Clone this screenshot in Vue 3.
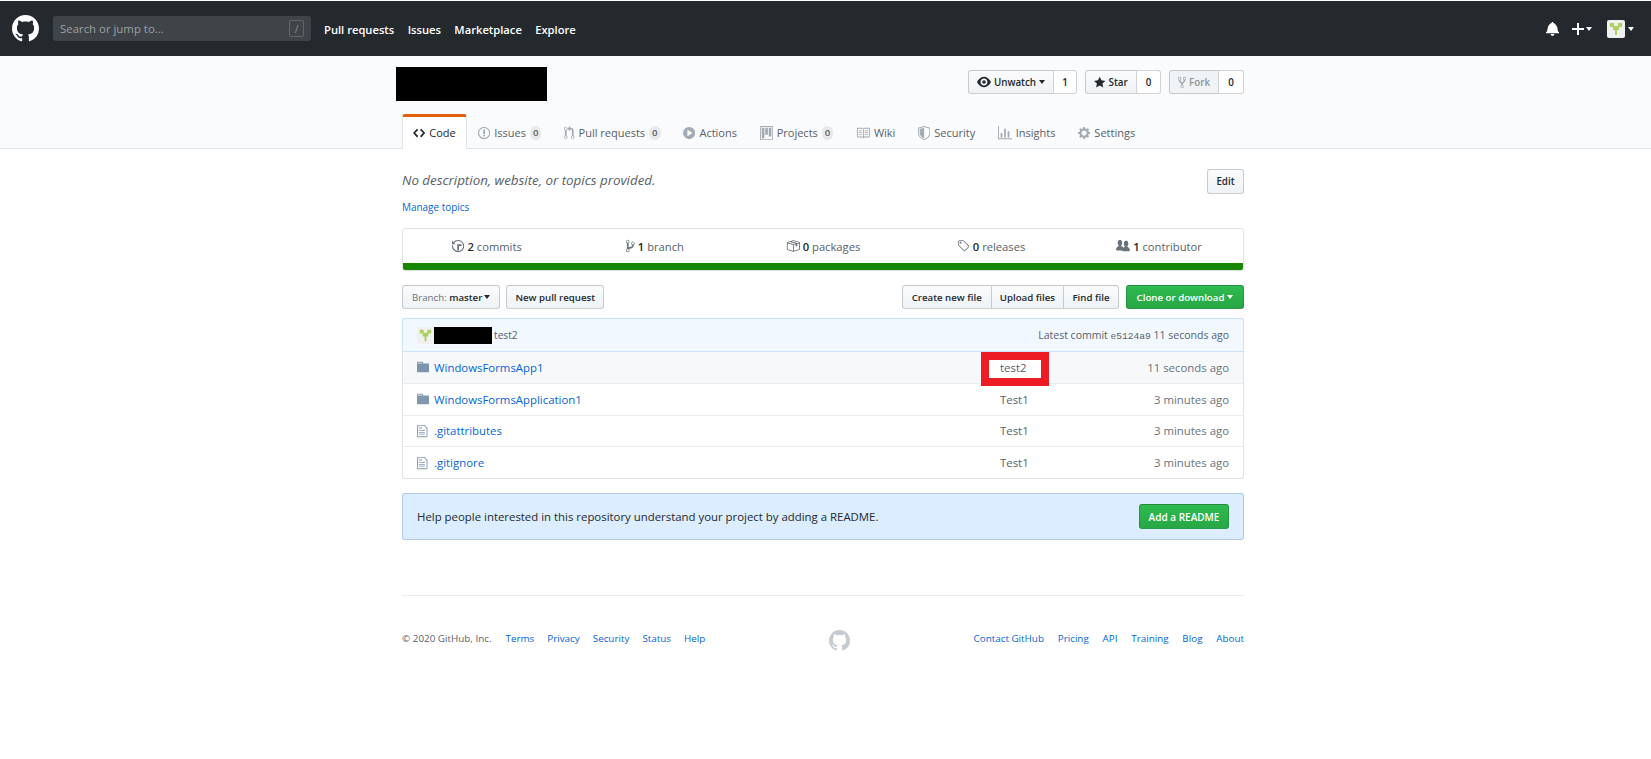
<script setup>
const p = {
  mark: 'M8 0C3.58 0 0 3.58 0 8c0 3.54 2.29 6.53 5.47 7.59.4.07.55-.17.55-.38 0-.19-.01-.82-.01-1.49-2.01.37-2.53-.49-2.69-.94-.09-.23-.48-.94-.82-1.13-.28-.15-.68-.52-.01-.53.63-.01 1.08.58 1.23.82.72 1.21 1.87.87 2.33.66.07-.52.28-.87.51-1.07-1.78-.2-3.64-.89-3.64-3.95 0-.87.31-1.59.82-2.15-.08-.2-.36-1.02.08-2.12 0 0 .67-.21 2.2.82.64-.18 1.32-.27 2-.27.68 0 1.36.09 2 .27 1.53-1.04 2.2-.82 2.2-.82.44 1.1.16 1.92.08 2.12.51.56.82 1.27.82 2.15 0 3.07-1.87 3.75-3.65 3.95.29.25.54.73.54 1.48 0 1.07-.01 1.93-.01 2.2 0 .21.15.46.55.38A8.013 8.013 0 0016 8c0-4.42-3.58-8-8-8z',
  bell: 'M14 12v1H0v-1l.73-.58c.77-.77.81-2.55 1.19-4.42C2.69 3.23 6 2 6 2c0-.55.45-1 1-1s1 .45 1 1c0 0 3.39 1.23 4.16 5 .38 1.88.42 3.66 1.19 4.42l.66.58H14zm-7 4c1.11 0 2-.89 2-2H5c0 1.11.89 2 2 2z',
  plus: 'M12 9H7v5H5V9H0V7h5V2h2v5h5v2z',
  eye: 'M8.06 2C3 2 0 8 0 8s3 6 8.06 6C13 14 16 8 16 8s-3-6-7.94-6zM8 12c-2.2 0-4-1.78-4-4 0-2.2 1.8-4 4-4 2.22 0 4 1.8 4 4 0 2.22-1.78 4-4 4zm2-4c0 1.11-.89 2-2 2-1.11 0-2-.89-2-2 0-1.11.89-2 2-2 1.11 0 2 .89 2 2z',
  star: 'M14 6l-4.9-.64L7 1 4.9 5.36 0 6l3.6 3.26L2.67 14 7 11.67 11.33 14l-.93-4.74L14 6z',
  fork: 'M8 1a1.993 1.993 0 00-1 3.72V6L5 8 3 6V4.72A1.993 1.993 0 002 1a1.993 1.993 0 00-1 3.72V6.5l3 3v1.78A1.993 1.993 0 005 15a1.993 1.993 0 001-3.72V9.5l3-3V4.72A1.993 1.993 0 008 1zM2 4.2C1.34 4.2.8 3.65.8 3c0-.65.55-1.2 1.2-1.2.65 0 1.2.55 1.2 1.2 0 .65-.55 1.2-1.2 1.2zm3 10c-.66 0-1.2-.55-1.2-1.2 0-.65.55-1.2 1.2-1.2.65 0 1.2.55 1.2 1.2 0 .65-.55 1.2-1.2 1.2zm3-10c-.66 0-1.2-.55-1.2-1.2 0-.65.55-1.2 1.2-1.2.65 0 1.2.55 1.2 1.2 0 .65-.55 1.2-1.2 1.2z',
  code: 'M9.5 3L8 4.5 11.5 8 8 11.5 9.5 13 14 8 9.5 3zm-5 0L0 8l4.5 5L6 11.5 2.5 8 6 4.5 4.5 3z',
  issue: 'M7 2.3c3.14 0 5.7 2.56 5.7 5.7s-2.56 5.7-5.7 5.7A5.71 5.71 0 011.3 8c0-3.14 2.56-5.7 5.7-5.7zM7 1C3.14 1 0 4.14 0 8s3.14 7 7 7 7-3.14 7-7-3.14-7-7-7zm1 3H6v5h2V4zm0 6H6v2h2v-2z',
  pr: 'M11 11.28V5c-.03-.78-.34-1.47-.94-2.06C9.46 2.35 8.78 2.03 8 2H7V0L4 3l3 3V4h1c.27.02.48.11.69.31.21.2.3.42.31.69v6.28A1.993 1.993 0 0010 15a1.993 1.993 0 001-3.72zm-1 2.92c-.66 0-1.2-.55-1.2-1.2 0-.65.55-1.2 1.2-1.2.65 0 1.2.55 1.2 1.2 0 .65-.55 1.2-1.2 1.2zM4 3c0-1.11-.89-2-2-2a1.993 1.993 0 00-1 3.72v6.56A1.993 1.993 0 002 15a1.993 1.993 0 001-3.72V4.72c.59-.34 1-.98 1-1.72zm-.8 10c0 .66-.55 1.2-1.2 1.2-.65 0-1.2-.55-1.2-1.2 0-.65.55-1.2 1.2-1.2.65 0 1.2.55 1.2 1.2zM2 4.2C1.34 4.2.8 3.65.8 3c0-.65.55-1.2 1.2-1.2.65 0 1.2.55 1.2 1.2 0 .65-.55 1.2-1.2 1.2z',
  play: 'M14 8A7 7 0 110 8a7 7 0 0114 0zm-8.223 3.482l4.599-3.066a.5.5 0 000-.832L5.777 4.518A.5.5 0 005 4.934v6.132a.5.5 0 00.777.416z',
  project: 'M10 12h3V2h-3v10zm-4-2h3V2H6v8zm-4 4h3V2H2v12zm-1 1h13V1H1v14zM14 0H1a1 1 0 00-1 1v14a1 1 0 001 1h13a1 1 0 001-1V1a1 1 0 00-1-1z',
  book: 'M3 5h4v1H3V5zm0 3h4V7H3v1zm0 2h4V9H3v1zm11-5h-4v1h4V5zm0 2h-4v1h4V7zm0 2h-4v1h4V9zm2-6v9c0 .55-.45 1-1 1H9.5l-1 1-1-1H2c-.55 0-1-.45-1-1V3c0-.55.45-1 1-1h5.5l1 1 1-1H15c.55 0 1 .45 1 1zm-8 .5L7.5 3H2v9h6V3.5zm7-.5H9.5l-.5.5V12h6V3z',
  shield: 'M0 2l7-2 7 2v6.02C14 12.69 8.69 16 7 16c-1.69 0-7-3.31-7-7.98V2zm1 .75L7 1l6 1.75v5.268C13 12.104 8.449 15 7 15c-1.449 0-6-2.896-6-6.982V2.75zm1 .75L7 2v12c-1.207 0-5-2.482-5-5.985V3.5z',
  graph: 'M16 14v1H0V0h1v14h15zM5 13H3V8h2v5zm4 0H7V3h2v10zm4 0h-2V6h2v7z',
  gear: 'M14 8.77v-1.6l-1.94-.64-.45-1.09.88-1.84-1.13-1.13-1.81.91-1.09-.45-.69-1.92h-1.6l-.63 1.94-1.11.45-1.84-.88-1.13 1.13.91 1.81-.45 1.09L0 7.23v1.59l1.94.64.45 1.09-.88 1.84 1.13 1.13 1.81-.91 1.09.45.69 1.92h1.59l.63-1.94 1.11-.45 1.84.88 1.13-1.13-.92-1.81.47-1.09L14 8.75v.02zM7 11c-1.66 0-3-1.34-3-3s1.34-3 3-3 3 1.34 3 3-1.34 3-3 3z',
  history: 'M8 13H6V6h5v2H8v5zM7 1C4.81 1 2.87 2.02 1.59 3.59L0 2v4h4L2.5 4.5C3.55 3.17 5.17 2.3 7 2.3c3.14 0 5.7 2.56 5.7 5.7s-2.56 5.7-5.7 5.7A5.71 5.71 0 011.3 8c0-.34.03-.67.09-1H.08C.03 7.33 0 7.66 0 8c0 3.86 3.14 7 7 7s7-3.14 7-7-3.14-7-7-7z',
  branch: 'M10 5c0-1.11-.89-2-2-2a1.993 1.993 0 00-1 3.72v.3c-.02.52-.23.98-.63 1.38-.4.4-.86.61-1.38.63-.83.02-1.48.16-2 .45V4.72a1.993 1.993 0 00-1-3.72C.88 1 0 1.89 0 3a2 2 0 001 1.72v6.56c-.59.35-1 .99-1 1.72 0 1.11.89 2 2 2 1.11 0 2-.89 2-2 0-.53-.2-1-.53-1.36.09-.06.48-.41.59-.47.25-.11.56-.17.94-.17 1.05-.05 1.95-.45 2.75-1.25S8.95 7.77 9 6.73h-.02C9.59 6.37 10 5.73 10 5zM2 1.8c.66 0 1.2.55 1.2 1.2 0 .65-.55 1.2-1.2 1.2C1.35 4.2.8 3.65.8 3c0-.65.55-1.2 1.2-1.2zm0 12.41c-.66 0-1.2-.55-1.2-1.2 0-.65.55-1.2 1.2-1.2.65 0 1.2.55 1.2 1.2 0 .65-.55 1.2-1.2 1.2zm6-8c-.66 0-1.2-.55-1.2-1.2 0-.65.55-1.2 1.2-1.2.65 0 1.2.55 1.2 1.2 0 .65-.55 1.2-1.2 1.2z',
  pkg: 'M1 4.27v7.47c0 .45.3.84.75.97l6.5 1.73c.16.05.34.05.5 0l6.5-1.73c.45-.13.75-.52.75-.97V4.27c0-.45-.3-.84-.75-.97l-6.5-1.74a1.4 1.4 0 00-.5 0L1.75 3.3c-.45.13-.75.52-.75.97zm7 9.09l-6-1.59V5l6 1.61v6.75zM2 4l2.5-.67L11 5.06l-2.5.67L2 4zm13 7.77l-6 1.59V6.61l2-.55V8.5l2-.53V5.53L15 5v6.77zm-2-7.24L6.5 2.8l2-.53L15 4l-2 .53z',
  tag: 'M7.73 1.73C7.26 1.26 6.62 1 5.96 1H3.5C2.13 1 1 2.13 1 3.5v2.47c0 .66.27 1.3.73 1.77l6.06 6.06c.39.39 1.02.39 1.41 0l4.59-4.59a.996.996 0 000-1.41L7.73 1.73zM2.38 7.09c-.31-.3-.47-.7-.47-1.13V3.5c0-.88.72-1.59 1.59-1.59h2.47c.42 0 .83.16 1.13.47l6.14 6.13-4.73 4.73-6.13-6.15zM3.01 3h2v2H3V3h.01z',
  org: 'M16 12.999c0 .439-.45 1-1 1H7.995c-.539 0-.994-.447-.995-.999H1c-.54 0-1-.561-1-1 0-2.634 3-4 3-4s.229-.409 0-1c-.841-.621-1.058-.59-1-3 .058-2.419 1.367-3 2.5-3s2.442.58 2.5 3c.058 2.41-.159 2.379-1 3-.229.59 0 1 0 1s1.549.711 2.42 2.088C9.196 9.369 10 8.999 10 8.999s.229-.409 0-1c-.841-.62-1.058-.59-1-3 .058-2.419 1.367-3 2.5-3s2.437.581 2.495 3c.059 2.41-.158 2.38-1 3-.229.59 0 1 0 1s3.005 1.366 3.005 4z',
  dir: 'M13 4H7V3c0-.66-.31-1-1-1H1c-.55 0-1 .45-1 1v10c0 .55.45 1 1 1h12c.55 0 1-.45 1-1V5c0-.55-.45-1-1-1zM6 4H1V3h5v1z',
  file: 'M6 5H2V4h4v1zM2 8h7V7H2v1zm0 2h7V9H2v1zm0 2h7v-1H2v1zm10-7.5V14c0 .55-.45 1-1 1H1c-.55 0-1-.45-1-1V2c0-.55.45-1 1-1h7.5L12 4.5zM11 5L8 2H1v12h10V5z'
}
const identicon = 'M3 3h4v3h4V3h4v4h-3v3h-2v5H8v-5H6V7H3z'
const navs = ['Pull requests', 'Issues', 'Marketplace', 'Explore']
const tabs = [
  { t: 'Issues', i: 'issue', w: 14, c: 0 },
  { t: 'Pull requests', i: 'pr', w: 12, c: 0 },
  { t: 'Actions', i: 'play', w: 14 },
  { t: 'Projects', i: 'project', w: 15, c: 0 },
  { t: 'Wiki', i: 'book', w: 16 },
  { t: 'Security', i: 'shield', w: 14 },
  { t: 'Insights', i: 'graph', w: 16 },
  { t: 'Settings', i: 'gear', w: 14 }
]
const stats = [
  { n: 2, t: 'commits', i: 'history', w: 14 },
  { n: 1, t: 'branch', i: 'branch', w: 10 },
  { n: 0, t: 'packages', i: 'pkg', w: 16 },
  { n: 0, t: 'releases', i: 'tag', w: 15 },
  { n: 1, t: 'contributor', i: 'org', w: 16 }
]
const files = [
  { name: 'WindowsFormsApp1', i: 'dir', w: 14, msg: 'test2', age: '11 seconds ago', hl: true },
  { name: 'WindowsFormsApplication1', i: 'dir', w: 14, msg: 'Test1', age: '3 minutes ago' },
  { name: '.gitattributes', i: 'file', w: 12, msg: 'Test1', age: '3 minutes ago' },
  { name: '.gitignore', i: 'file', w: 12, msg: 'Test1', age: '3 minutes ago' }
]
const footL = ['Terms', 'Privacy', 'Security', 'Status', 'Help']
const footR = ['Contact GitHub', 'Pricing', 'API', 'Training', 'Blog', 'About']
</script>

<template>
  <div class="page">
    <header class="top">
      <svg class="logo" viewBox="0 0 16 16"><path :d="p.mark" /></svg>
      <div class="search">
        <span>Search or jump to...</span>
        <kbd class="slash">/</kbd>
      </div>
      <nav class="topnav">
        <a v-for="n in navs" :key="n">{{ n }}</a>
      </nav>
      <div class="topright">
        <svg class="bell" viewBox="0 0 14 16"><path :d="p.bell" /></svg>
        <svg class="plus" viewBox="0 0 12 16"><path :d="p.plus" /></svg>
        <i class="caret light pluscaret"></i>
        <svg class="avatar big" viewBox="0 0 18 18">
          <rect width="18" height="18" rx="2" fill="#f0f0f0" />
          <path :d="identicon" fill="#a9d15c" />
        </svg>
        <i class="caret light"></i>
      </div>
    </header>

    <section class="repohead">
      <div class="wrap">
        <div class="titlerow">
          <div class="redact-title"></div>
          <div class="actions">
            <div class="pair">
              <span class="btn w-un"><svg class="oc eye" viewBox="0 0 16 16"><path :d="p.eye" /></svg>Unwatch<i class="caret tight"></i></span>
              <span class="count">1</span>
            </div>
            <div class="pair">
              <span class="btn w-st"><svg class="oc" viewBox="0 0 14 16"><path :d="p.star" /></svg>Star</span>
              <span class="count c2">0</span>
            </div>
            <div class="pair">
              <span class="btn off w-fk"><svg class="oc" viewBox="0 0 10 16"><path :d="p.fork" /></svg>Fork</span>
              <span class="count c3">0</span>
            </div>
          </div>
        </div>
        <nav class="tabs">
          <a class="tab on"><svg class="oc" viewBox="0 0 14 16"><path :d="p.code" /></svg>Code</a>
          <a v-for="t in tabs" :key="t.t" class="tab">
            <svg class="oc" :viewBox="`0 0 ${t.w} 16`"><path :d="p[t.i]" /></svg>{{ t.t }}
            <span v-if="t.c !== undefined" class="pill">{{ t.c }}</span>
          </a>
        </nav>
      </div>
    </section>

    <main class="wrap">
      <div class="descrow">
        <em>No description, website, or topics provided.</em>
        <span class="btn solo">Edit</span>
      </div>
      <a class="link topics">Manage topics</a>

      <div class="summary">
        <ul>
          <li v-for="s in stats" :key="s.t">
            <svg class="oc" :viewBox="`0 0 ${s.w} 16`"><path :d="p[s.i]" /></svg>
            <span><b>{{ s.n }}</b> {{ s.t }}</span>
          </li>
        </ul>
        <div class="langbar"></div>
      </div>

      <div class="filebar">
        <span class="btn bar solo brbtn"><span class="dim">Branch:</span>&nbsp;master<i class="caret"></i></span>
        <span class="btn bar solo newpr">New pull request</span>
        <div class="grp">
          <span class="btn bar">Create new file</span>
          <span class="btn bar">Upload files</span>
          <span class="btn bar">Find file</span>
        </div>
        <span class="btn bar solo green">Clone or download<i class="caret light"></i></span>
      </div>

      <div class="files">
        <div class="commit">
          <svg class="avatar" viewBox="0 0 18 18">
            <rect width="18" height="18" fill="#f0f0f0" />
            <path :d="identicon" fill="#a9d15c" />
          </svg>
          <span class="redact-name"></span>
          <span class="cmsg">test2</span>
          <span class="latest">Latest commit <span class="sha">e5124a9</span> 11 seconds ago</span>
        </div>
        <div v-for="f in files" :key="f.name" class="row" :class="{ hl: f.hl }">
          <span class="ficon"><svg :viewBox="`0 0 ${f.w} 16`"><path :d="p[f.i]" /></svg></span>
          <a class="link fname">{{ f.name }}</a>
          <span class="fmsg" :class="{ boxed: f.hl }">{{ f.msg }}</span>
          <span class="fage">{{ f.age }}</span>
        </div>
      </div>

      <div class="readme">
        <span>Help people interested in this repository understand your project by adding a README.</span>
        <span class="btn bar solo green addbtn">Add a README</span>
      </div>

      <footer class="foot">
        <div class="fl">
          <span class="copy">© 2020 GitHub, Inc.</span>
          <a v-for="l in footL" :key="l" class="link">{{ l }}</a>
        </div>
        <svg class="footlogo" viewBox="0 0 16 16"><path :d="p.mark" /></svg>
        <div class="fr">
          <a v-for="l in footR" :key="l" class="link">{{ l }}</a>
        </div>
      </footer>
    </main>
  </div>
</template>

<style>
html, body { margin: 0; background: #fff; }
</style>

<style scoped>
.page {
  font-family: "Open Sans", "Noto Sans", "Liberation Sans", sans-serif;
  font-size: 11.2px;
  color: #24292e;
  padding-top: 1px;
  min-height: 758px;
}
.wrap { width: 842px; margin-left: 402px; }
.link { color: #0366d6; }
svg { fill-rule: evenodd; }
.oc { height: 14px; width: auto; fill: currentColor; flex: none; }

/* top bar */
.top {
  height: 55px;
  background: #24292e;
  display: flex;
  align-items: center;
  padding: 0 17px 0 12px;
  color: #fff;
}
.logo { width: 27px; height: 27px; fill: #fff; flex: none; }
.search {
  margin-left: 14px;
  width: 258px;
  height: 25px;
  box-sizing: border-box;
  background: #3f4448;
  border-radius: 3px;
  color: #9da0a3;
  display: flex;
  align-items: center;
  justify-content: space-between;
  padding: 0 7px;
  font-size: 11.4px;
}
.slash {
  width: 15px;
  height: 17px;
  box-sizing: border-box;
  border: 1px solid #62676b;
  border-radius: 2px;
  font: 10px "Open Sans", sans-serif;
  display: flex;
  align-items: center;
  justify-content: center;
  color: #8c9094;
}
.topnav { margin: 2px 0 0 13px; display: flex; gap: 13.4px; font-weight: 600; font-size: 11.2px; }
.topright { margin-left: auto; display: flex; align-items: center; }
.bell { height: 15px; width: 13px; fill: #fff; }
.plus { height: 16px; width: 12px; fill: #fff; margin-left: 13px; }
.caret {
  display: inline-block;
  width: 0;
  height: 0;
  border: 3px solid transparent;
  border-top: 4px solid #24292e;
  border-bottom: 0;
  margin-left: 3px;
}
.caret.light { border-top-color: #fff; }
.pluscaret { margin-left: 2px; }
.caret.tight { margin-left: 0; }
.avatar.big { width: 18px; height: 18px; margin-left: 15px; }

/* repo head */
.repohead { background: #fafbfc; border-bottom: 1px solid #e1e4e8; box-sizing: border-box; height: 93px; }
.titlerow { display: flex; justify-content: space-between; padding-top: 11px; height: 58px; box-sizing: border-box; }
.redact-title { width: 151px; height: 34px; background: #000; margin-left: -6px; }
.actions { display: flex; gap: 8px; margin-top: 3px; height: 24px; }
.pair { display: flex; height: 24px; }
.btn {
  display: inline-flex;
  align-items: center;
  gap: 3px;
  box-sizing: border-box;
  height: 24px;
  padding: 0 8px;
  border: 1px solid rgba(27, 31, 35, .2);
  border-radius: 3px 0 0 3px;
  background: linear-gradient(#fafbfc, #eff3f6);
  font-weight: 600;
  font-size: 9.8px;
  color: #24292e;
  white-space: nowrap;
}
.w-un, .w-st, .w-fk { justify-content: center; padding: 0; }
.w-un { width: 86px; }
.w-st { width: 52px; }
.w-fk { width: 50px; }
.btn.off { color: #8e9296; background: #eff3f6; }
.btn.off .oc { color: #a3a7ab; }
.pair .oc { height: 13px; }
.pair .oc.eye { height: 14px; }
.count {
  display: flex;
  align-items: center;
  justify-content: center;
  box-sizing: border-box;
  height: 24px;
  width: 24px;
  margin-left: -1px;
  background: #fff;
  border: 1px solid rgba(27, 31, 35, .2);
  border-radius: 0 3px 3px 0;
  font-weight: 600;
  font-size: 9.8px;
}
.count.c2 { width: 25px; }
.count.c3 { width: 26px; }
.tabs { display: flex; height: 35px; }
.tab {
  display: flex;
  align-items: center;
  gap: 4px;
  box-sizing: border-box;
  height: 35px;
  padding: 2px 11.3px 0;
  color: #586069;
  font-size: 11px;
  white-space: nowrap;
}
.tab .oc { color: #a3aab1; height: 14px; }
.tab.on {
  background: #fff;
  color: #24292e;
  border: 1px solid #e1e4e8;
  border-top: 3px solid #e36209;
  border-bottom: 0;
  border-radius: 3px 3px 0 0;
  padding: 0 10px 1px;
}
.tab.on .oc { color: #24292e; }
.pill {
  display: inline-block;
  background: rgba(27, 31, 35, .08);
  color: #586069;
  border-radius: 7px;
  padding: 0 3px;
  line-height: 14px;
  font-size: 9.6px;
  font-weight: 600;
}

/* main */
.descrow { display: flex; justify-content: space-between; align-items: flex-start; margin-top: 20px; height: 25px; }
.descrow em { font-size: 13.35px; line-height: 22px; color: #586069; }
.btn.solo { border-radius: 3px; }
.descrow .btn { width: 37px; height: 25px; justify-content: center; padding: 0; }
.topics { display: block; margin-top: 6px; line-height: 14px; font-size: 9.95px; }
.summary {
  margin-top: 14px;
  height: 43px;
  box-sizing: border-box;
  border: 1px solid #dfe2e5;
  border-radius: 3px;
  overflow: hidden;
  display: flex;
  flex-direction: column;
}
.summary ul { list-style: none; margin: 0; padding: 0; display: flex; height: 35px; }
.summary li {
  flex: 1;
  display: flex;
  align-items: center;
  justify-content: center;
  gap: 3px;
  color: #586069;
  font-size: 11.2px;
  white-space: pre;
}
.summary li b { color: #24292e; font-weight: 600; }
.summary .oc { color: #6a737d; height: 14px; }
.langbar { height: 7px; background: #178600; }

.filebar { display: flex; align-items: center; margin-top: 14px; height: 24px; }
.btn.bar { height: 24px; padding: 0 9px; border-radius: 0; gap: 0; font-size: 9.7px; }
.btn.bar.solo { border-radius: 3px; }
.dim { color: #6a737d; font-weight: 400; }
.brbtn .caret { margin-left: 2px; }
.btn.bar.newpr { margin-left: 6px; padding: 0 8px; }
.grp { margin-left: auto; display: flex; border-radius: 3px; }
.grp .btn { margin-left: -1px; }
.grp .btn:first-child { border-radius: 3px 0 0 3px; margin-left: 0; }
.grp .btn.bar:nth-child(2) { padding: 0 8px; }
.grp .btn.bar:last-child { border-radius: 0 3px 3px 0; padding: 0 8.5px; }
.btn.green {
  background: linear-gradient(#2ebb4f, #28a745);
  color: #fff;
  border-color: rgba(27, 31, 35, .2);
}
.filebar .green { margin-left: 7px; width: 118px; justify-content: center; padding: 0; }

.files {
  margin-top: 9px;
  border: 1px solid #dfe2e5;
  border-top: 0;
  border-radius: 3px;
}
.commit {
  height: 33px;
  box-sizing: border-box;
  display: flex;
  align-items: center;
  padding: 0 14px;
  background: #f1f8ff;
  border: 1px solid #c8e1ff;
  border-bottom: 0;
  margin: 0 -1px;
  border-radius: 3px 3px 0 0;
  color: #586069;
  font-size: 10.5px;
}
.commit .avatar { width: 17px; height: 17px; flex: none; }
.redact-name { width: 58px; height: 17px; background: #000; flex: none; }
.cmsg { margin-left: 2px; font-size: 10.2px; }
.latest { margin-left: auto; }
.sha { font-family: "Liberation Mono", monospace; font-size: 9.6px; }
.row {
  height: 31.75px;
  box-sizing: border-box;
  border-top: 1px solid #eaecef;
  display: flex;
  align-items: center;
  padding: 0 14px;
  position: relative;
  font-size: 11.4px;
}
.row:nth-child(2) { border-top-color: #c8e1ff; }
.row.hl { background: #f6f8fa; z-index: 1; }
.ficon { width: 17px; display: flex; }
.ficon svg { height: 14px; width: auto; fill: rgba(3, 47, 98, .5); }
.fname { flex: none; width: 566px; }
.fmsg { color: #586069; position: relative; }
.boxed::before {
  content: "";
  position: absolute;
  left: -19px;
  top: -8px;
  width: 68px;
  height: 34px;
  box-sizing: border-box;
  border: 8px solid #ed1c24;
  background: #fff;
  z-index: -1;
}
.fage { margin-left: auto; color: #6a737d; }

.readme {
  margin-top: 14px;
  height: 47px;
  box-sizing: border-box;
  background: #dbedff;
  border: 1px solid rgba(4, 66, 137, .2);
  border-radius: 3px;
  display: flex;
  align-items: center;
  justify-content: space-between;
  padding: 0 14px;
  font-size: 11.4px;
  color: #24292e;
}
.btn.bar.addbtn { width: 90px; height: 25px; justify-content: center; padding: 0; font-size: 10px; }

.foot {
  margin-top: 55px;
  border-top: 1px solid #eaecef;
  padding-top: 34px;
  display: flex;
  justify-content: space-between;
  align-items: flex-start;
  font-size: 9.85px;
}
.fl, .fr { display: flex; line-height: 14px; margin-top: 1px; }
.fl { gap: 13px; }
.fr { gap: 13.8px; }
.copy { color: #586069; margin-right: 1px; }
.footlogo { width: 21px; height: 21px; fill: #c6cbd1; }
</style>
